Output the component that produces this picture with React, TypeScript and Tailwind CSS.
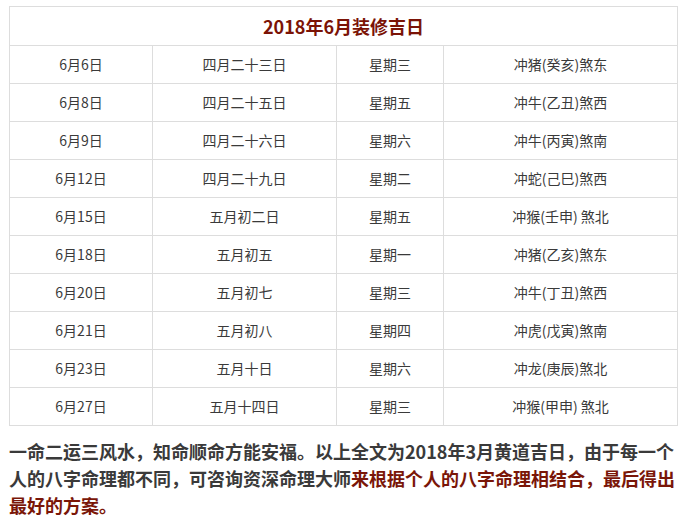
import React from "react";

const rows: [string, string, string, string][] = [
  ["6月6日", "四月二十三日", "星期三", "冲猪(癸亥)煞东"],
  ["6月8日", "四月二十五日", "星期五", "冲牛(乙丑)煞西"],
  ["6月9日", "四月二十六日", "星期六", "冲牛(丙寅)煞南"],
  ["6月12日", "四月二十九日", "星期二", "冲蛇(己巳)煞西"],
  ["6月15日", "五月初二日", "星期五", "冲猴(壬申) 煞北"],
  ["6月18日", "五月初五", "星期一", "冲猪(乙亥)煞东"],
  ["6月20日", "五月初七", "星期三", "冲牛(丁丑)煞西"],
  ["6月21日", "五月初八", "星期四", "冲虎(戊寅)煞南"],
  ["6月23日", "五月十日", "星期六", "冲龙(庚辰)煞北"],
  ["6月27日", "五月十四日", "星期三", "冲猴(甲申) 煞北"],
];

export default function App() {
  return (
    <div
      className="w-[681px] h-[524px] bg-white pt-[6px] pl-[9px] pr-[4px] overflow-hidden"
      style={{ fontFamily: '"Noto Sans CJK SC", "Noto Sans", sans-serif' }}
    >
      <table className="w-[668px] table-fixed border-collapse">
        <colgroup>
          <col className="w-[143px]" />
          <col className="w-[184px]" />
          <col className="w-[107px]" />
          <col className="w-[234px]" />
        </colgroup>
        <tbody>
          <tr className="h-[39px]">
            <td
              colSpan={4}
              className="border border-[#dddddd] text-center text-[18px] font-bold text-[#7b1306] p-0"
            >
              2018年6月装修吉日
            </td>
          </tr>
          {rows.map((r, i) => (
            <tr key={i} className="h-[38px]">
              {r.map((c, j) => (
                <td
                  key={j}
                  className="border border-[#dddddd] text-center text-[14px] text-[#3a3a3a] p-0"
                >
                  {c}
                </td>
              ))}
            </tr>
          ))}
        </tbody>
      </table>
      <p className="mt-[12px] text-[18px] leading-[27px] font-bold text-[#3a3a3a]">
        一命二运三风水，知命顺命方能安福。以上全文为2018年3月黄道吉日，由于每一个人的八字命理都不同，可咨询资深命理大师
        <span className="text-[#7a1608]">来根据个人的八字命理相结合，最后得出最好的方案。</span>
      </p>
    </div>
  );
}
